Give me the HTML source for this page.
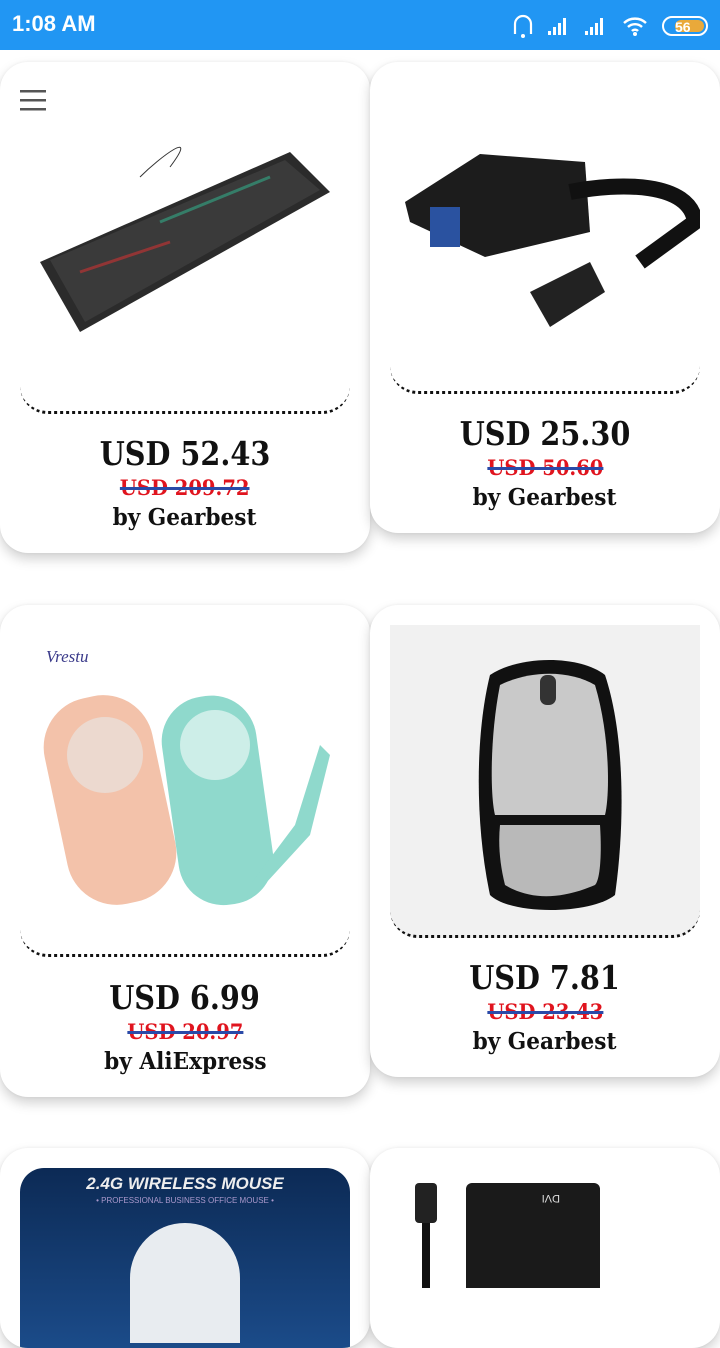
<!DOCTYPE html>
<html><head><meta charset="utf-8"><style>
*{margin:0;padding:0;box-sizing:border-box}
body{width:720px;height:1280px;overflow:hidden;background:#fff;position:relative;font-family:"DejaVu Serif","Liberation Serif",serif}
.sb{position:absolute;left:0;top:0;width:720px;height:50px;background:#2196F3;color:#fff}
.sb .t{position:absolute;left:12px;top:11px;font:bold 22px "Liberation Sans",sans-serif}
.card{position:absolute;background:#fff;border-radius:28px;box-shadow:0 6px 12px rgba(0,0,0,.18),0 0 3px rgba(0,0,0,.06);overflow:hidden}
.img{position:absolute;border-bottom:3px dotted #111;border-radius:0 0 28px 28px;overflow:hidden}
.p{position:absolute;left:0;right:0;text-align:center;font-weight:bold;color:#111}
.p span{display:inline-block}
.p1{font-size:33px}.p1 span{transform:scaleX(.87)}
.p2{font-size:21px;color:#e0141e;text-decoration:line-through;text-decoration-color:#2a4aa8;text-decoration-thickness:3px}
.p2 span{transform:scaleX(.93);text-decoration:line-through;text-decoration-color:#2a4aa8;text-decoration-thickness:3px}
.p3{font-size:23px}.p3 span{transform:scaleX(.94)}
</style></head><body>
<div class="sb"><div class="t">1:08 AM</div>
<svg style="position:absolute;left:510px;top:12px" width="200" height="28" viewBox="0 0 200 28">
<path d="M5 22 V12 a8 8 0 0 1 16 0 V22" stroke="#fff" stroke-width="2.2" fill="none"/><circle cx="13" cy="24" r="2" fill="#fff"/>
<g fill="#fff"><rect x="38" y="19" width="3" height="4"/><rect x="43" y="15" width="3" height="8"/><rect x="48" y="11" width="3" height="12"/><rect x="53" y="6" width="3" height="17"/>
<rect x="75" y="19" width="3" height="4"/><rect x="80" y="15" width="3" height="8"/><rect x="85" y="11" width="3" height="12"/><rect x="90" y="6" width="3" height="17"/></g>
<path d="M114 11 a16 16 0 0 1 22 0 M118 15 a10 10 0 0 1 14 0 M122 19 a4 4 0 0 1 6 0" stroke="#fff" stroke-width="2.4" fill="none"/><circle cx="125" cy="22" r="2" fill="#fff"/>
<rect x="153" y="5" width="44" height="18" rx="9" fill="none" stroke="#fff" stroke-width="2"/><rect x="165" y="8" width="29" height="12" rx="6" fill="#e9a93a"/>
<text x="165" y="20" font-family="Liberation Sans" font-weight="bold" font-size="14" fill="#fff">56</text></svg></div>

<div class="card" style="left:0;top:62px;width:370px;height:491px">
<div class="img" style="left:20px;top:20px;width:330px;height:332px">
<svg width="330" height="330"><polygon points="20,180 270,70 310,110 60,250" fill="#2b2b2b"/><polygon points="30,178 265,78 300,108 65,240" fill="#3a3a3a"/><path d="M120 95 C140 75,180 45,150 85" stroke="#333" fill="none"/><path d="M140 140 L250 95" stroke="#3a8" stroke-width="3" opacity=".6"/><path d="M60 190 L150 160" stroke="#c33" stroke-width="3" opacity=".6"/></svg></div>
<svg style="position:absolute;left:20px;top:26px" width="28" height="24"><g fill="#555"><rect y="2" width="26" height="2.5"/><rect y="11" width="26" height="2.5"/><rect y="20" width="26" height="2.5"/></g></svg>
<div class="p p1" style="top:372px"><span>USD 52.43</span></div>
<div class="p p2" style="top:413px"><span>USD 209.72</span></div>
<div class="p p3" style="top:442px"><span>by Gearbest</span></div></div>

<div class="card" style="left:370px;top:62px;width:350px;height:471px">
<div class="img" style="left:20px;top:20px;width:310px;height:312px">
<svg width="310" height="310"><polygon points="15,120 90,72 195,80 200,150 95,175 20,140" fill="#1c1c1c"/><path d="M180 110 C230 100,300 100,305 140 L250 180" stroke="#111" stroke-width="16" fill="none"/><polygon points="140,210 200,180 215,210 160,245" fill="#222"/><rect x="40" y="125" width="30" height="40" fill="#2a52a0"/></svg></div>
<div class="p p1" style="top:352px"><span>USD 25.30</span></div>
<div class="p p2" style="top:393px"><span>USD 50.60</span></div>
<div class="p p3" style="top:422px"><span>by Gearbest</span></div></div>

<div class="card" style="left:0;top:605px;width:370px;height:492px">
<div class="img" style="left:20px;top:20px;width:330px;height:332px">
<div style="position:absolute;left:26px;top:22px;font:italic 17px 'Liberation Serif';color:#3a3a8a">Vrestu</div>
<svg width="330" height="330"><rect x="35" y="70" width="110" height="210" rx="50" fill="#f3c2aa" transform="rotate(-12 90 175)"/><rect x="150" y="70" width="95" height="210" rx="45" fill="#8fd9cc" transform="rotate(-8 200 175)"/><path d="M235 270 L290 210 L310 130 L300 120 L275 200 L230 260" fill="#8fd9cc"/><circle cx="85" cy="130" r="38" fill="#ecd9cf"/><circle cx="195" cy="120" r="35" fill="#cdeee8"/></svg></div>
<div class="p p1" style="top:373px"><span>USD 6.99</span></div>
<div class="p p2" style="top:414px"><span>USD 20.97</span></div>
<div class="p p3" style="top:443px"><span>by AliExpress</span></div></div>

<div class="card" style="left:370px;top:605px;width:350px;height:472px">
<div class="img" style="left:20px;top:20px;width:310px;height:313px;background:#f1f1f1">
<svg width="310" height="310"><path d="M100 50 C130 30,190 30,215 50 C235 110,235 200,225 270 C200 290,120 290,100 270 C85 200,85 110,100 50Z" fill="#111"/><path d="M110 60 C140 45,180 45,205 60 C220 110,220 170,215 190 L105 190 C100 170,100 110,110 60Z" fill="#c9c9c9"/><path d="M110 200 L210 200 C212 230,210 255,205 260 C170 275,140 275,115 260 C110 240,108 220,110 200Z" fill="#b9b9b9"/><rect x="150" y="50" width="16" height="30" rx="7" fill="#333"/></svg></div>
<div class="p p1" style="top:353px"><span>USD 7.81</span></div>
<div class="p p2" style="top:394px"><span>USD 23.43</span></div>
<div class="p p3" style="top:423px"><span>by Gearbest</span></div></div>

<div class="card" style="left:0;top:1148px;width:370px;height:200px">
<div style="position:absolute;left:20px;top:20px;width:330px;height:200px;border-radius:24px 24px 0 0;background:linear-gradient(#0c2a55,#1d4f8f)">
<div style="position:absolute;left:0;right:0;top:6px;text-align:center;font:italic bold 17px 'Liberation Sans';color:#eee">2.4G WIRELESS MOUSE</div>
<div style="position:absolute;left:0;right:0;top:28px;text-align:center;font:8px 'Liberation Sans';color:#a9c">• PROFESSIONAL BUSINESS OFFICE MOUSE •</div>
<div style="position:absolute;left:110px;top:55px;width:110px;height:120px;border-radius:55px 55px 0 0;background:#e8ecf0"></div></div></div>

<div class="card" style="left:370px;top:1148px;width:350px;height:200px">
<svg style="position:absolute;left:20px;top:20px" width="310" height="120"><rect x="76" y="15" width="134" height="120" rx="6" fill="#1a1a1a"/><rect x="25" y="15" width="22" height="40" rx="4" fill="#222"/><rect x="32" y="55" width="8" height="80" fill="#111"/><text x="170" y="35" font-size="11" fill="#ddd" transform="rotate(180 170 31)" font-family="Liberation Sans">DVI</text></svg></div>
</body></html>
